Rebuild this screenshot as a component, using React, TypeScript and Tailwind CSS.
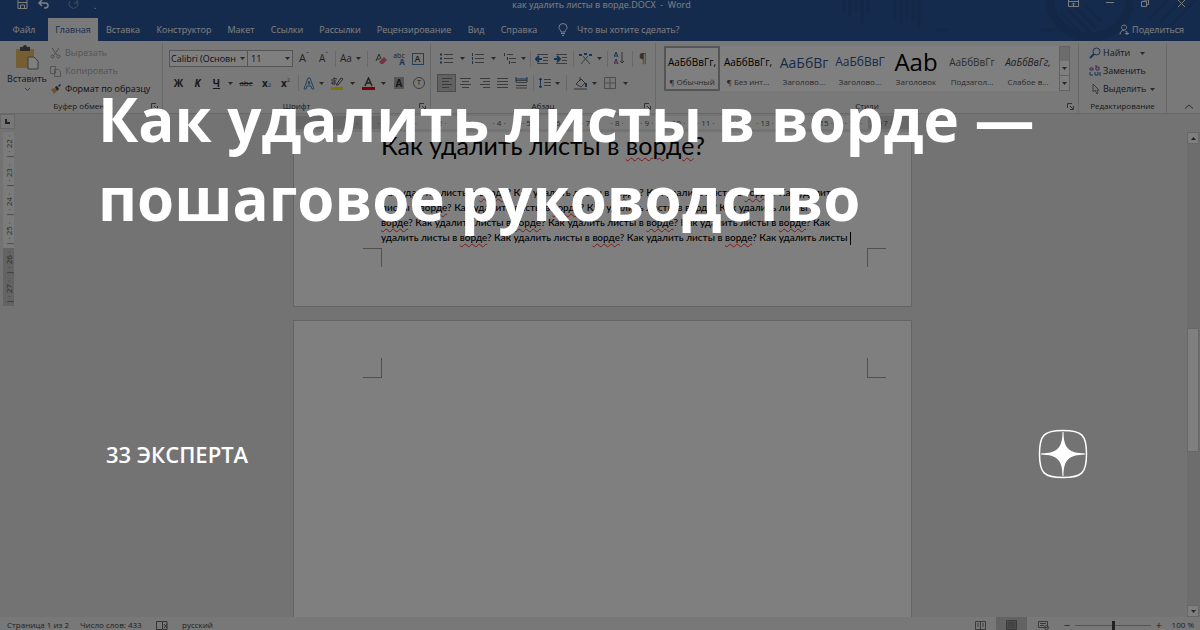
import React from 'react';

const tabs = [
  { name: 'Файл', width: 'w-[48px]' },
  { name: 'Главная', width: 'w-[50px]', active: true },
  { name: 'Вставка', width: 'w-[50px]' },
  { name: 'Конструктор', width: 'w-[72px]' },
  { name: 'Макет', width: 'w-[42px]' },
  { name: 'Ссылки', width: 'w-[50px]' },
  { name: 'Рассылки', width: 'w-[56px]' },
  { name: 'Рецензирование', width: 'w-[92px]' },
  { name: 'Вид', width: 'w-[32px]' },
  { name: 'Справка', width: 'w-[54px]' },
];

const styleItems = [
  { sample: 'АаБбВвГг,', name: '¶ Обычный', look: 'text-[10px] text-black', active: true },
  { sample: 'АаБбВвГг,', name: '¶ Без инт...', look: 'text-[10px] text-black' },
  { sample: 'АаБбВг', name: 'Заголово...', look: 'text-[14px] text-[#2f5496]' },
  { sample: 'АаБбВвГ', name: 'Заголово...', look: 'text-[12px] text-[#2f5496]' },
  { sample: 'Ааb', name: 'Заголовок', look: 'text-[24px] text-black' },
  { sample: 'АаБбВвГг', name: 'Подзагол...', look: 'text-[10px] text-[#5a5a5a]' },
  { sample: 'АаБбВвГг,', name: 'Слабое в...', look: 'text-[10px] italic text-[#404040]' },
];

const bodyLines = [
  'Как удалить листы в ворде? Как удалить листы в ворде? Как удалить листы в ворде? Как удалить',
  'листы в ворде? Как удалить листы в ворде? Как удалить листы в ворде? Как удалить листы в',
  'ворде? Как удалить листы в ворде? Как удалить листы в ворде? Как удалить листы в ворде? Как',
  'удалить листы в ворде? Как удалить листы в ворде? Как удалить листы в ворде? Как удалить листы ',
];

const rulerMarks = [2, 1, 0, 1, 2, 3, 4, 5, 6, 7, 8, 9, 10, 11, 12, 13, 14, 15, 16, 17];

const Caret = ({ width = 'w-3' }: { width?: string }) => (
  <span className={`${width} flex shrink-0 justify-center`}>
    <svg width="5" height="3" viewBox="0 0 5 3" fill="#555">
      <path d="M0 0h5L2.5 3z" />
    </svg>
  </span>
);

const Tool = ({ label, width = 'w-[19px]', className = '', children }: {
  label: string;
  width?: string;
  className?: string;
  children: React.ReactNode;
}) => (
  <button aria-label={label} className={`${width} ${className} flex h-[18px] shrink-0 items-center justify-center`}>
    {children}
  </button>
);

const Divider = ({ width = 'w-2' }: { width?: string }) => (
  <span className={`${width} flex h-4 shrink-0 justify-center`}>
    <span className="w-px bg-[#d2d2d2]" />
  </span>
);

const Lines = ({ d, marks }: { d: string; marks?: React.ReactNode }) => (
  <svg width="13" height="12" viewBox="0 0 13 12" fill="none" stroke="#777">
    <path d={d} />
    {marks}
  </svg>
);

const Launcher = () => (
  <button aria-label="Параметры группы" className="absolute right-1 bottom-[3px]">
    <svg width="7" height="7" viewBox="0 0 7 7" fill="none" stroke="#666">
      <path d="M.5 5V.5H5M3 3l3 3M6.5 3v3.5H3" />
    </svg>
  </button>
);

const Group = ({ title, width, launcher, children }: {
  title: string;
  width: string;
  launcher?: boolean;
  children: React.ReactNode;
}) => (
  <section className={`${width} relative flex shrink-0 flex-col border-r border-[#d2d2d2]`}>
    <div className="h-[57px]">{children}</div>
    <div className="text-center text-[8px] leading-3 text-[#333]">{title}</div>
    {launcher && <Launcher />}
  </section>
);

const Spelled = ({ text }: { text: string }) => (
  <>
    {text.split('ворде').map((part, i) => (
      <React.Fragment key={i}>
        {i > 0 && (
          <span className="underline decoration-[#ff3030] decoration-wavy decoration-1 underline-offset-2">ворде</span>
        )}
        {part}
      </React.Fragment>
    ))}
  </>
);

const TitleBar = () => (
  <header className="relative shrink-0 overflow-hidden bg-[#2b579a] text-white">
    <svg className="absolute top-0 right-0" width="360" height="41" viewBox="0 0 360 41" fill="none" stroke="#274f8e">
      <path d="M4 0v13M10 0v17M16 0v12M22 0v23M28 0v14M55 0v20M61 0v24M67 0v20M73 0v22M79 0v28" strokeWidth="3" />
      <path d="M210 0a40 37 0 0 0 80 0" strokeWidth="9" />
      <path d="M200 30h16M220 12l24 24M228 10l22 22M236 8l20 20M244 4l18 18M320 22l22-22M330 26l26-26M310 18l18-18M95 30h14" strokeWidth="3" />
    </svg>
    <div className="relative flex h-[18px] items-start text-[9px] leading-[9px]">
      <div className="flex flex-1 items-center gap-[10px] pl-[17px]">
        <button aria-label="Сохранить">
          <svg width="11" height="10" viewBox="0 0 11 10" fill="none" stroke="#fff">
            <path d="M1 0v8.500h9V0M3.500 8V5h4v3M1 2.500h9" />
          </svg>
        </button>
        <button aria-label="Отменить">
          <svg width="12" height="10" viewBox="0 0 12 10" fill="none" stroke="#fff" strokeWidth="1.500">
            <path d="M4 0L1 3l3 3M1 3h6c4 0 4 5 0 5H6" />
          </svg>
        </button>
        <button aria-label="Повторить" className="ml-2 opacity-40">
          <svg width="12" height="10" viewBox="0 0 12 10" fill="none" stroke="#fff">
            <path d="M2 1a4.500 4.500 0 1 0 7 0M9 0v3H6" />
          </svg>
        </button>
        <span className="pl-1">.</span>
      </div>
      <div className="whitespace-pre">как удалить листы в ворде.DOCX  -  Word</div>
      <div className="flex flex-1 justify-end gap-[27px] pr-[14px]">
        <button aria-label="Параметры ленты">
          <svg width="11" height="8" viewBox="0 0 11 8" fill="none" stroke="#fff">
            <path d="M.5 0v6.500h10V0M0 1.500h11M5.500 6V3M4 4.500L5.500 3 7 4.500" />
          </svg>
        </button>
        <button aria-label="Свернуть">
          <svg width="8" height="8" viewBox="0 0 8 8" stroke="#fff">
            <path d="M0 2.500h8" />
          </svg>
        </button>
        <button aria-label="Развернуть">
          <svg width="9" height="8" viewBox="0 0 9 8" fill="none" stroke="#fff">
            <path d="M.5 1.500h5v5h-5zM2.500 0h5v4.500H6" />
          </svg>
        </button>
        <button aria-label="Закрыть">
          <svg width="9" height="8" viewBox="0 0 9 8" stroke="#fff">
            <path d="M1 0l7 7M8 0L1 7" />
          </svg>
        </button>
      </div>
    </div>
    <nav className="relative flex h-[23px] items-stretch text-[9px]">
      {tabs.map((tab) => (
        <button
          key={tab.name}
          className={`${tab.width} shrink-0 whitespace-nowrap text-center ${tab.active ? 'bg-[#f3f3f3] text-[#2b579a]' : ''}`}
        >
          {tab.name}
        </button>
      ))}
      <button className="ml-3 flex items-center gap-[9px] whitespace-nowrap">
        <svg width="10" height="13" viewBox="0 0 10 13" fill="none" stroke="#fff">
          <path d="M3 9C3 7 1 6.500 1 4.500a4 4 0 0 1 8 0C9 6.500 7 7 7 9zM3 10.500h4M4 12.500h2" />
        </svg>
        Что вы хотите сделать?
      </button>
      <button className="ml-auto flex items-center gap-[3px] pr-4 whitespace-nowrap">
        <svg width="10" height="11" viewBox="0 0 10 11" fill="none" stroke="#fff">
          <path d="M5 6a2.500 2.500 0 1 1 .1 0C2.500 6.500 1 8 1 10.500M6 6.500L7.500 8M6 9.500h4M8 7.500v4" />
        </svg>
        Поделиться
      </button>
    </nav>
  </header>
);

const Clipboard = () => (
  <Group title="Буфер обмена" width="w-[163px]" launcher>
    <div className="flex pt-px">
      <button className="flex w-[50px] flex-col items-center pl-1 text-[9px] leading-[10px] text-[#333]">
        <svg className="mt-px" width="24" height="25" viewBox="0 0 24 25">
          <path d="M1 4h18v19H1z" fill="#eabf65" />
          <path d="M5 2h3a2 2 0 0 1 4 0h3v4H5z" fill="#555" />
          <path d="M13 12h6l4 4v8H13z" fill="#fff" stroke="#777" />
        </svg>
        <span className="mt-1">Вставить</span>
        <svg className="mt-1" width="5" height="3" viewBox="0 0 5 3" fill="none" stroke="#777">
          <path d="M0 0l2.500 2.500L5 0" />
        </svg>
      </button>
      <div className="flex flex-col text-[9px] leading-[18px]">
        <button className="flex items-center gap-[4px] text-[#aaa]">
          <svg width="11" height="11" viewBox="0 0 11 11" fill="none" stroke="#999">
            <path d="M2 0l5 7M9 0L4 7" />
            <circle cx="2.500" cy="8.500" r="1.500" />
            <circle cx="8.500" cy="8.500" r="1.500" />
          </svg>
          Вырезать
        </button>
        <button className="flex items-center gap-[4px] text-[#aaa]">
          <svg width="11" height="11" viewBox="0 0 11 11" fill="none" stroke="#aaa">
            <path d="M.5.5h5v7h-5zM4.500 3.500h4l2 2v5h-6z" />
          </svg>
          Копировать
        </button>
        <button className="flex items-center gap-[4px] whitespace-nowrap text-[#222]">
          <svg width="11" height="11" viewBox="0 0 11 11">
            <path d="M1 5l4-1 2 3-3 3z" fill="#e0a060" />
            <path d="M5 3l2-1 2 3-2 2zM8 2l2-2 1 1-2 2z" fill="#444" />
          </svg>
          Формат по образцу
        </button>
      </div>
    </div>
  </Group>
);

const FontGroup = () => (
  <Group title="Шрифт" width="w-[268px]" launcher>
    <div className="flex h-[31px] items-center pl-[6px] text-[#444]">
      <button aria-label="Шрифт" className="flex h-[17px] w-[79px] items-center justify-between border border-[#ababab] bg-white pl-px text-[9px] whitespace-nowrap text-[#222]">
        Calibri (Основн<Caret width="w-[9px]" />
      </button>
      <button aria-label="Размер шрифта" className="flex h-[17px] w-[45px] items-center justify-between border border-l-0 border-[#ababab] bg-white pl-[3px] text-[9px] text-[#222]">
        11<Caret width="w-[9px]" />
      </button>
      <Tool label="Увеличить размер" width="w-[22px]">
        <span className="text-[11px]">A</span><sup className="text-[7px] text-[#2b579a]">ˆ</sup>
      </Tool>
      <Tool label="Уменьшить размер" width="w-[17px]">
        <span className="text-[10px]">A</span><sup className="text-[7px] text-[#2b579a]">ˇ</sup>
      </Tool>
      <Divider width="w-[6px]" />
      <Tool label="Регистр" width="w-4"><span className="text-[10px]">Aa</span></Tool>
      <Caret width="w-[9px]" />
      <Divider />
      <Tool label="Очистить формат">
        <svg width="12" height="12" viewBox="0 0 12 12">
          <path d="M1 8L4 1l2 5M2 6h3" fill="none" stroke="#555" />
          <path d="M4 9l5-5 3 3-4 4H6z" fill="#e4657c" />
        </svg>
      </Tool>
      <Tool label="Фонетика" width="w-[18px]">
        <span className="flex flex-col items-end text-[7px] leading-[6px]">abc<b className="text-[8px] text-[#2b6ab0]">A</b></span>
      </Tool>
      <Tool label="Граница символа">
        <span className="flex h-3 w-3 items-center justify-center border border-[#4a7cb5] text-[9px] font-semibold">A</span>
      </Tool>
    </div>
    <div className="flex h-[18px] items-center pl-[6px] text-[10px] text-[#333]">
      <Tool label="Полужирный"><b>Ж</b></Tool>
      <Tool label="Курсив"><b className="italic">К</b></Tool>
      <Tool label="Подчеркнутый"><b className="underline">Ч</b></Tool>
      <Caret width="w-[9px]" />
      <Tool label="Зачеркнутый" width="w-[22px]"><span className="text-[8px] line-through">abc</span></Tool>
      <Tool label="Подстрочный"><b>x</b><sub className="text-[6px] text-[#2b6ab0]">2</sub></Tool>
      <Tool label="Надстрочный"><b>x</b><sup className="text-[6px] text-[#2b6ab0]">2</sup></Tool>
      <Divider width="w-[6px]" />
      <Tool label="Эффекты" width="w-[16px]">
        <svg width="12" height="13" viewBox="0 0 12 13" fill="none" stroke="#4a86c5">
          <path d="M1 12l4-11h2l4 11H9L8 9H4l-1 3zM5 7l1-3 1 3z" />
        </svg>
      </Tool>
      <Caret width="w-[9px]" />
      <Tool label="Выделение" width="w-[22px]">
        <svg width="13" height="13" viewBox="0 0 13 13">
          <path d="M0 10h12v3H0z" fill="#f4ea00" />
          <path d="M5 8l5-7 2 1-5 6zM0 3h4v4H1V5h3M2 1l4 1" fill="none" stroke="#555" />
        </svg>
      </Tool>
      <Caret width="w-[9px]" />
      <Tool label="Цвет текста" width="w-[22px]">
        <svg width="13" height="13" viewBox="0 0 13 13">
          <path d="M0 10h13v3H0z" fill="#f00000" />
          <path d="M3 9l3.500-8L10 9M4 6h5" fill="none" stroke="#444" strokeWidth="1.500" />
        </svg>
      </Tool>
      <Caret width="w-[9px]" />
      <Tool label="Заливка символа" width="w-[22px]"><b className="flex h-3 w-[10px] items-center justify-center bg-[#aaa]">A</b></Tool>
      <Tool label="Обведенный символ" width="w-[18px]">
        <span className="flex h-3 w-3 items-center justify-center rounded-full border border-[#777] text-[7px]">T</span>
      </Tool>
    </div>
  </Group>
);

const ParagraphGroup = () => (
  <Group title="Абзац" width="w-[225px]" launcher>
    <div className="flex h-[31px] items-center pl-[6px]">
      <Tool label="Маркеры"><Lines d="M4 1.500h9M4 5.500h9M4 9.500h9" marks={<path d="M0 1.500h2M0 5.500h2M0 9.500h2" stroke="#2b6ab0" strokeWidth="2" />} /></Tool>
      <Caret />
      <Tool label="Нумерация"><Lines d="M4 1.500h9M4 5.500h9M4 9.500h9" marks={<path d="M1.500 0v3M1.500 4v3M1.500 8v3" stroke="#2b6ab0" />} /></Tool>
      <Caret />
      <Tool label="Многоуровневый список" width="w-[20px]"><Lines d="M4 1.500h6M6 5.500h7M8 9.500h5" marks={<path d="M1.500 0v3M4.500 4v3M6.500 8v3" stroke="#2b6ab0" />} /></Tool>
      <Caret width="w-[9px]" />
      <Divider width="w-[4px]" />
      <Tool label="Уменьшить отступ"><Lines d="M2 1.500h11M8 4.500h5M8 7.500h5M2 10.500h11" marks={<path d="M7 6H1M4 3L1 6l3 3" stroke="#2b6ab0" strokeWidth="2" />} /></Tool>
      <Tool label="Увеличить отступ"><Lines d="M2 1.500h11M8 4.500h5M8 7.500h5M2 10.500h11" marks={<path d="M0 6h6M3 3l3 3-3 3" stroke="#2b6ab0" strokeWidth="2" />} /></Tool>
      <Divider width="w-[6px]" />
      <Tool label="Азиатская верстка"><Lines d="M2 11L9 3M11 11L4 3" marks={<path d="M0 2h3M10 2h3M5 1h3" stroke="#2b6ab0" strokeWidth="2" />} /></Tool>
      <Caret width="w-[9px]" />
      <Divider width="w-[6px]" />
      <Tool label="Сортировка">
        <svg width="11" height="13" viewBox="0 0 11 13" fill="none">
          <path d="M0 5l2-5 2 5M1 4h2" stroke="#2b6ab0" />
          <path d="M0 12l2-5 2 5M1 11h2" stroke="#8050a0" />
          <path d="M8 0v11M6 9l2 2 2-2" stroke="#666" />
        </svg>
      </Tool>
      <Divider width="w-[6px]" />
      <Tool label="Знаки абзаца" width="w-4"><span className="text-[12px] text-[#666]">¶</span></Tool>
    </div>
    <div className="flex h-[18px] items-center pl-[6px]">
      <Tool label="По левому краю" className="border border-[#999] bg-[#c5c5c5]"><Lines d="M2 1.500h10M2 4.500h7M2 7.500h10M2 10.500h7" /></Tool>
      <Tool label="По центру"><Lines d="M1 1.500h11M3 4.500h7M1 7.500h11M3 10.500h7" /></Tool>
      <Tool label="По правому краю" width="w-[18px]"><Lines d="M2 1.500h10M5 4.500h7M2 7.500h10M5 10.500h7" /></Tool>
      <Tool label="По ширине"><Lines d="M1 1.500h11M1 4.500h11M1 7.500h11M1 10.500h11" /></Tool>
      <Tool label="Распределить"><Lines d="M1 3.500h11M1 5.500h11M1 8.500h11M1 11h11" marks={<path d="M1 0v5M12 0v5M1 2h11" stroke="#2b6ab0" />} /></Tool>
      <Divider width="w-[4px]" />
      <Tool label="Интервал" width="w-[18px]"><Lines d="M6 2.500h7M6 5.500h7M6 8.500h7" marks={<path d="M2.500 1v10M1 3l1.500-2L4 3M1 9l1.500 2L4 9" stroke="#2b6ab0" />} /></Tool>
      <Caret width="w-[9px]" />
      <Divider width="w-[9px]" />
      <Tool label="Заливка">
        <svg width="14" height="13" viewBox="0 0 14 13" fill="none" stroke="#666">
          <path d="M2 7l5-5 4 4-4 4zM6 0v4M0 12h13" />
          <path d="M12 6v4" stroke="#2b6ab0" strokeWidth="2" />
        </svg>
      </Tool>
      <Caret width="w-[9px]" />
      <Tool label="Границы" width="w-[22px]">
        <svg width="12" height="12" viewBox="0 0 12 12" fill="none" stroke="#999">
          <path d="M.5.5h11v11H.5zM6 0v12M0 6h12" />
        </svg>
      </Tool>
      <Caret width="w-[9px]" />
    </div>
  </Group>
);

const StylesGroup = () => (
  <Group title="Стили" width="w-[423px]" launcher>
    <div className="ml-[8px] flex pt-[3px]">
      <div className="flex h-[45px] w-[395px] overflow-hidden bg-white">
        {styleItems.map((s, i) => (
          <button
            key={i}
            className={`flex w-[56px] shrink-0 flex-col items-center overflow-hidden border-2 whitespace-nowrap ${s.active ? 'border-[#ababab]' : 'border-transparent'}`}
          >
            <span className={`flex h-7 items-center ${s.look}`}>{s.sample}</span>
            <span className="text-[8px] leading-3 text-[#555]">{s.name}</span>
          </button>
        ))}
      </div>
      <div className="flex h-[45px] w-[11px] flex-col border border-[#c5c5c5] bg-white">
        <button aria-label="Вверх" className="flex-1 bg-[#d8d8d8]" />
        <button aria-label="Вниз" className="flex flex-1 items-center justify-center"><Caret width="w-2" /></button>
        <button aria-label="Все стили" className="flex flex-1 items-center justify-center border-t border-[#c5c5c5]"><Caret width="w-2" /></button>
      </div>
    </div>
  </Group>
);

const EditGroup = () => (
  <Group title="Редактирование" width="w-[88px]">
    <div className="flex flex-col pt-px pl-[10px] text-[9px] leading-[18px] text-[#333]">
      <button className="flex items-center gap-[2px]">
        <svg width="12" height="12" viewBox="0 0 12 12" fill="none" stroke="#2b6ab0">
          <circle cx="7.500" cy="4.500" r="3.500" />
          <path d="M5 7l-4 4" strokeWidth="2" />
        </svg>
        Найти<Caret width="w-[20px]" />
      </button>
      <button className="flex items-center gap-[2px]">
        <svg width="12" height="12" viewBox="0 0 12 12" fill="none">
          <path d="M1 3h3v2H1zM7 0v5h3V2H7" stroke="#8050a0" />
          <path d="M1 7v3h3M6 7v3h3V7M11 7v4" stroke="#2b6ab0" />
        </svg>
        Заменить
      </button>
      <button className="flex items-center gap-[2px]">
        <svg width="12" height="12" viewBox="0 0 12 12" fill="none" stroke="#777">
          <path d="M4 1v8l2-2 2 4 1-1-1-3h2z" />
        </svg>
        Выделить<Caret width="w-[9px]" />
      </button>
    </div>
  </Group>
);

const Ruler = () => (
  <div className="flex h-[18px] shrink-0 pr-[13px]">
    <span className="flex h-[15px] w-[15px] items-center justify-center border border-[#cfcfcf] bg-[#f0f0f0]">
      <svg width="5" height="5" viewBox="0 0 5 5" fill="none" stroke="#444" strokeWidth="2"><path d="M1 0v4h4" /></svg>
    </span>
    <div className="mr-auto ml-auto flex pl-[3px]">
      <div className="mt-[2px] flex h-[13px] w-[619px] bg-[linear-gradient(90deg,#cfcfcf_88px,#f6f6f6_88px,#f6f6f6_575px,#cfcfcf_575px)] px-[14px] text-[8px] leading-[13px] text-[#555]">
        {rulerMarks.map((n, i) => (
          <span key={i} className="flex-1 text-center whitespace-nowrap">· {n || ' '} ·</span>
        ))}
      </div>
    </div>
  </div>
);

const VerticalRuler = () => (
  <div className="flex w-[18px] shrink-0 flex-col items-start pl-[3px] text-[8px] leading-[11px] text-[#555]">
    {[22, 23, 24, 25, 26, 27].map((n) => (
      <div key={n} className={`flex h-[29px] w-[11px] items-center justify-center ${n > 25 ? 'bg-[#c6c6c6]' : 'bg-[#f6f6f6]'}`}>
        <span className="rotate-180 whitespace-nowrap [writing-mode:vertical-rl]">| · {n} ·</span>
      </div>
    ))}
  </div>
);

const Document = () => (
  <main className="flex min-w-0 flex-1 flex-col items-center overflow-hidden font-['Lato',sans-serif] text-black">
    <article className="w-[619px] shrink-0 border border-t-0 border-[#c9c9c9] bg-white">
      <div className="h-[174px]">
        <h2 className="pl-[87px] text-[25px] leading-[26px] whitespace-nowrap"><Spelled text="Как удалить листы в ворде?" /></h2>
        <div className="mt-[27px] pl-[87px] text-[10px] leading-[15px] font-medium whitespace-pre">
          {bodyLines.map((line, i) => (
            <p key={i}>
              <Spelled text={line} />
              {i === 3 && <span className="inline-block h-[13px] w-px bg-black align-middle" />}
            </p>
          ))}
        </div>
        <div className="mt-[3px] flex justify-between pr-[25px] pl-[69px]">
          <span className="h-[19px] w-[19px] border-t border-r border-[#a0a0a0]" />
          <span className="h-[19px] w-[19px] border-t border-l border-[#a0a0a0]" />
        </div>
      </div>
    </article>
    <article className="mt-[13px] w-[619px] flex-1 border border-b-0 border-[#c9c9c9] bg-white">
      <div className="flex justify-between pt-[37px] pr-[25px] pl-[69px]">
        <span className="h-[20px] w-[19px] border-r border-b border-[#a0a0a0]" />
        <span className="h-[20px] w-[19px] border-b border-l border-[#a0a0a0]" />
      </div>
    </article>
  </main>
);

const ScrollBar = () => (
  <div className="flex w-[13px] shrink-0 flex-col bg-[#dadada] pr-px">
    <button aria-label="Прокрутить вверх" className="flex h-[12px] items-center justify-center border border-[#cfcfcf] bg-white">
      <svg width="5" height="3" viewBox="0 0 5 3" fill="#444"><path d="M0 3h5L2.500 0z" /></svg>
    </button>
    <div className="flex-[184]" />
    <div className="flex-[123] border border-[#cfcfcf] bg-white" />
    <div className="flex-[153]" />
    <button aria-label="Прокрутить вниз" className="flex h-[12px] items-center justify-center border border-[#cfcfcf] bg-white"><Caret width="w-2" /></button>
  </div>
);

const StatusBar = () => (
  <footer className="flex h-[13px] shrink-0 items-center bg-[#f0f0f0] pt-[3px] pr-[6px] pl-[7px] text-[8px] leading-[10px] whitespace-nowrap text-[#444]">
    <span className="w-[73px]">Страница 1 из 2</span>
    <span className="w-[76px]">Число слов: 433</span>
    <svg className="mr-[14px]" width="12" height="9" viewBox="0 0 12 9" fill="none" stroke="#666">
      <path d="M.5.5h6v8h-6zM7 .5h4v8H7M8 3l3 4M11 3L8 7" />
    </svg>
    <span>русский</span>
    <div className="ml-auto flex items-center">
      <button aria-label="Режим чтения" className="flex w-[32px] justify-center">
        <svg width="11" height="9" viewBox="0 0 11 9" fill="none" stroke="#777"><path d="M.5.5h10v8H.5zM5.500 0v9M2 3h2M2 5h2M7 3h2M7 5h2" /></svg>
      </button>
      <button aria-label="Разметка страницы" className="-mt-[3px] flex h-[13px] w-[31px] justify-center bg-[#c6c6c6] pt-[3px]">
        <svg width="11" height="10" viewBox="0 0 11 10" fill="#999" stroke="#777"><path d="M.5.5h10v9H.5zM2 3h7M2 5h7M2 7h7" /></svg>
      </button>
      <button aria-label="Веб-документ" className="flex w-[32px] justify-center">
        <svg width="11" height="9" viewBox="0 0 11 9" fill="none" stroke="#777"><path d="M.5.5h9v6h-9zM2 2.500h6M2 4.500h4" /><circle cx="8.500" cy="6.500" r="2" /></svg>
      </button>
      <button aria-label="Уменьшить" className="w-4 text-[11px]">−</button>
      <div className="flex w-[76px] items-center">
        <span className="h-px flex-1 bg-[#aaa]" />
        <span className="h-[9px] w-[3px] bg-[#444]" />
        <span className="h-px flex-1 bg-[#aaa]" />
      </div>
      <button aria-label="Увеличить" className="w-4 text-[11px]">+</button>
      <span className="w-[27px] text-right">100 %</span>
    </div>
  </footer>
);

const App: React.FC = () => {
  return (
    <div className="relative flex h-screen flex-col overflow-hidden bg-[#e6e6e6] font-['Open_Sans','Noto_Sans',sans-serif]">
      <TitleBar />
      <div className="flex h-[73px] shrink-0 border-b border-[#d0d0d0] bg-[#f3f3f3] pt-[2px]">
        <Clipboard />
        <FontGroup />
        <ParagraphGroup />
        <StylesGroup />
        <EditGroup />
        <button aria-label="Свернуть ленту" className="ml-auto self-end pr-[7px] pb-1">
          <svg width="8" height="5" viewBox="0 0 8 5" fill="none" stroke="#555"><path d="M0 4.500L4 1l4 3.500" /></svg>
        </button>
      </div>
      <Ruler />
      <div className="flex min-h-0 flex-1">
        <VerticalRuler />
        <Document />
        <ScrollBar />
      </div>
      <StatusBar />

      <div className="absolute inset-0 flex flex-col bg-black/50 pt-[80px] pr-[112px] pl-[98px] text-white">
        <h1 className="text-[60px] leading-[79px] font-bold">Как удалить листы в ворде — пошаговое руководство</h1>
        <div className="mt-[191px] flex items-center justify-between">
          <a href="#" className="pl-[8px] text-[22px] leading-[30px] font-semibold">33 ЭКСПЕРТА</a>
          <svg width="50" height="50" viewBox="0 0 50 50" fill="none">
            <path d="M25 1.500C6 1.500 1.500 6 1.500 25S6 48.500 25 48.500 48.500 44 48.500 25 44 1.500 25 1.500z" stroke="#fff" strokeWidth="1.500" />
            <path d="M24.500 3h1c.2 16 5 21 21.500 21.500v1C30.500 26 25.700 31 25.500 47h-1C24.300 31 19.500 26 3 25.500v-1C19.500 24 24.300 19 24.500 3z" fill="#fff" />
          </svg>
        </div>
      </div>
    </div>
  );
};

export default App;
